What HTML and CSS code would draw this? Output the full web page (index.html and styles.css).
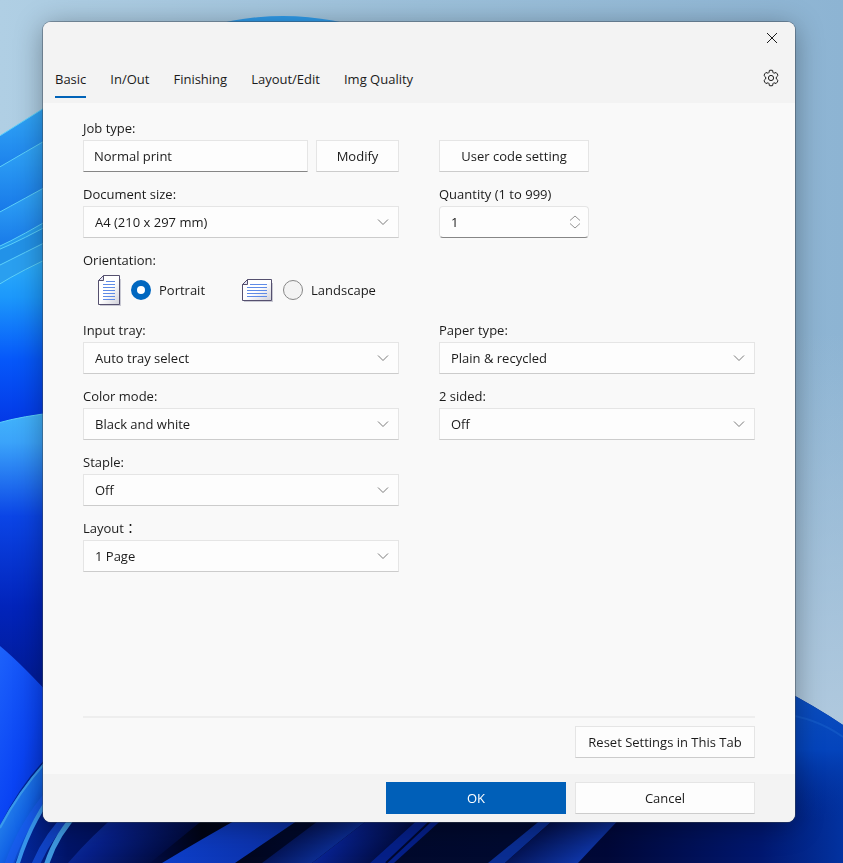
FILE: index.html
```html
<!DOCTYPE html>
<html lang="en">
<head>
  <meta charset="UTF-8" />
  <title>Printing Preferences</title>
  <link rel="stylesheet" href="styles.css">
</head>
<body>

  <!-- Desktop wallpaper -->
  <svg class="wallpaper" viewBox="0 0 843 863" preserveAspectRatio="none" aria-hidden="true">
    <defs>
      <linearGradient id="sky" x1="0" y1="0" x2="1" y2="0">
        <stop offset="0" stop-color="#b0cfe4" />
        <stop offset="0.5" stop-color="#9cc0da" />
        <stop offset="1" stop-color="#8db4d3" />
      </linearGradient>
      <linearGradient id="skyLow" x1="0" y1="0" x2="0" y2="1">
        <stop offset="0.2" stop-color="#b0c9de" stop-opacity="0" />
        <stop offset="0.8" stop-color="#b0c9de" />
      </linearGradient>
      <linearGradient id="band" x1="0" y1="0" x2="0" y2="1">
        <stop offset="0" stop-color="#35aefa" />
        <stop offset="1" stop-color="#0a5fe0" />
      </linearGradient>
      <linearGradient id="petal" x1="0" y1="0" x2="0" y2="1">
        <stop offset="0" stop-color="#2fb2fb" />
        <stop offset="0.25" stop-color="#1c98fb" />
        <stop offset="0.6" stop-color="#0658fa" />
        <stop offset="1" stop-color="#0335e4" />
      </linearGradient>
      <linearGradient id="petalLow" x1="0" y1="0" x2="0" y2="1">
        <stop offset="0" stop-color="#42b4fb" />
        <stop offset="0.1" stop-color="#3ba4fa" />
        <stop offset="0.35" stop-color="#0b45e6" />
        <stop offset="0.65" stop-color="#0224bb" />
        <stop offset="1" stop-color="#01188c" />
      </linearGradient>
      <linearGradient id="fold" x1="0" y1="0" x2="1" y2="1">
        <stop offset="0" stop-color="#1d62fb" />
        <stop offset="0.5" stop-color="#0a44f4" />
        <stop offset="1" stop-color="#0225b8" />
      </linearGradient>
      <linearGradient id="sweep" x1="0" y1="0" x2="1" y2="1">
        <stop offset="0.2" stop-color="#2f92ee" />
        <stop offset="0.5" stop-color="#1263e6" />
        <stop offset="0.8" stop-color="#0225a0" />
      </linearGradient>
      <linearGradient id="deep" x1="0" y1="0" x2="1" y2="0">
        <stop offset="0" stop-color="#0430b0" />
        <stop offset="0.08" stop-color="#011468" />
        <stop offset="0.16" stop-color="#010d50" />
        <stop offset="0.24" stop-color="#010415" />
        <stop offset="0.34" stop-color="#010828" />
        <stop offset="0.6" stop-color="#010a30" />
        <stop offset="0.72" stop-color="#010838" />
        <stop offset="0.9" stop-color="#01176f" />
        <stop offset="1" stop-color="#0232a0" />
      </linearGradient>
      <linearGradient id="stripe" x1="0" y1="0" x2="1" y2="0.4">
        <stop offset="0.1" stop-color="#1038a8" />
        <stop offset="0.4" stop-color="#07208a" />
        <stop offset="0.9" stop-color="#010a3a" />
      </linearGradient>
      <linearGradient id="stripeWide" x1="0" y1="0" x2="1" y2="0">
        <stop offset="0" stop-color="#0d3fca" />
        <stop offset="0.6" stop-color="#0c34b0" />
        <stop offset="1" stop-color="#0a2c98" />
      </linearGradient>
      <linearGradient id="stripeBack" x1="0" y1="0.4" x2="1" y2="1">
        <stop offset="0.1" stop-color="#010a3c" />
        <stop offset="0.7" stop-color="#0e34a4" />
      </linearGradient>
      <linearGradient id="rightHill" x1="0" y1="0" x2="0" y2="1">
        <stop offset="0" stop-color="#0c4fbe" />
        <stop offset="0.35" stop-color="#0444bc" />
        <stop offset="0.75" stop-color="#0232a0" stop-opacity="0" />
      </linearGradient>
    </defs>
    <rect width="843" height="863" fill="url(#sky)" />
    <rect y="200" width="843" height="663" fill="url(#skyLow)" />
    <ellipse cx="283" cy="76" rx="130" ry="60" fill="#2f9ae8" />

    <g stroke="#5cd0fa" stroke-width="1">
      <path fill="url(#band)" d="M-2 137 Q22 122 60 98 V220 H-2Z" />
      <path fill="url(#band)" d="M-2 168 Q22 154 60 132 V250 H-2Z" />
      <path fill="url(#band)" d="M-2 213 Q22 200 60 179 V280 H-2Z" />
      <path fill="#269eee" d="M-2 247 Q22 236 60 213 V300 H-2Z" />
      <path fill="#2292e8" d="M-2 250 Q22 240 60 219 V300 H-2Z" />
      <path fill="#2a9fef" d="M-2 266 Q22 254 60 235 V320 H-2Z" />
      <path fill="url(#petal)" d="M-2 285 Q22 270 60 253 V430 H-2Z" />
      <path fill="url(#petalLow)" d="M-2 423 Q22 416 60 412 V710 H-2Z" />
    </g>
    <rect y="740" width="780" height="123" fill="#010a30" />
    <path fill="url(#deep)" d="M0 760 H780 V688 Q815 706 843 725 V863 H0Z" />
    <path fill="url(#fold)" d="M0 646 Q22 664 60 706 V745 Q25 775 0 825Z" />
    <path fill="url(#sweep)" d="M0 825 Q22 784 60 745 V790 Q32 820 15 863 H0Z" />
    <g fill="none">
      <path stroke="#3a9aec" stroke-width="2" d="M60 747 Q22 785 0 828" />
      <path stroke="#1a5cf0" stroke-width="8" opacity="0.7" d="M52 790 Q22 825 8 866" />
      <path stroke="#3794ea" stroke-width="4" d="M60 784 Q32 817 17 866" />
      <path stroke="#1a5cf0" stroke-width="8" opacity="0.6" d="M72 812 Q48 835 35 866" />
      <path stroke="#3e97de" stroke-width="5" d="M80 810 Q56 834 46 866" />
    </g>
    <path fill="url(#stripe)" d="M68 863 Q92 835 122 810 H215 L150 863Z" />
    <path fill="url(#stripeWide)" d="M162 863 Q200 840 250 812 H310 L235 863Z" />
    <path fill="url(#stripeBack)" d="M262 863 L330 812 H378 L312 863Z" />
    <path fill="url(#stripe)" d="M312 863 L378 812 H426 L370 863Z" />
    <path fill="#051f87" d="M370 863 L424 814 H448 L394 863Z" />
    <path stroke="#01082e" stroke-width="2" d="M386 863 L438 814" />
    <path fill="#0a2d91" d="M488 863 L548 814 H560 L505 863Z" />
    <path fill="url(#stripeBack)" d="M505 863 L560 814 H624 L578 863Z" />
    <path fill="url(#rightHill)" d="M780 688 Q815 706 843 725 V863 H780Z" />
    <path fill="none" stroke="#175fca" stroke-width="2" opacity="0.6" d="M780 714 Q815 717 843 737" />
  </svg>

  <form class="dialog">
    <div class="titlebar">
      <button type="button" class="icon-button" aria-label="Close">
        <svg width="12" height="12" viewBox="0 0 12 12"><path d="M1 1 L11 11 M11 1 L1 11" /></svg>
      </button>
    </div>

    <div class="tabbar">
      <nav class="tabs">
        <a href="#basic" class="tab active">Basic</a>
        <a href="#inout" class="tab">In/Out</a>
        <a href="#finishing" class="tab">Finishing</a>
        <a href="#layout" class="tab">Layout/Edit</a>
        <a href="#quality" class="tab">Img Quality</a>
      </nav>
      <button type="button" class="icon-button" aria-label="Settings">
        <svg width="18" height="18" viewBox="0 0 18 18">
          <path d="M7.4 1.4 Q9 1 10.6 1.4 L11 3.5 Q11.3 4 12 4.2 L14.1 3.5 Q15.6 4.9 16 6.5 L14.4 8 Q14 9 14.4 10 L16 11.5 Q15.6 13.1 14.1 14.5 L12 13.8 Q11.3 14 11 14.5 L10.6 16.6 Q9 17 7.4 16.6 L7 14.5 Q6.7 14 6 13.8 L3.9 14.5 Q2.4 13.1 2 11.5 L3.6 10 Q4 9 3.6 8 L2 6.5 Q2.4 4.9 3.9 3.5 L6 4.2 Q6.7 4 7 3.5Z" />
          <circle cx="9" cy="9" r="2.6" />
        </svg>
      </button>
    </div>

    <div class="panel">
      <div class="fields">
        <div class="field">
          <label for="jobType">Job type:</label>
          <div class="row">
            <input type="text" id="jobType" class="control textbox" value="Normal print" readonly />
            <button type="button" class="button modify">Modify</button>
          </div>
        </div>
        <div class="field bottom">
          <button type="button" class="button narrow">User code setting</button>
        </div>

        <div class="field">
          <label for="docSize">Document size:</label>
          <div class="select">
            <select id="docSize" class="control"><option>A4 (210 x 297 mm)</option></select>
            <svg class="chevron" width="12" height="8" viewBox="0 0 12 8"><path d="M1 1.5 L6 6.5 L11 1.5" /></svg>
          </div>
        </div>
        <div class="field">
          <label for="quantity">Quantity (1 to 999)</label>
          <div class="select narrow">
            <input type="number" id="quantity" class="control number" value="1" min="1" max="999" />
            <svg class="spinner" width="12" height="14" viewBox="0 0 12 14"><path d="M1 5.5 L6 1 L11 5.5 M1 8.5 L6 13 L11 8.5" /></svg>
          </div>
        </div>

        <fieldset class="field wide">
          <legend>Orientation:</legend>
          <div class="radios">
            <label class="radio">
              <svg class="paper" width="24" height="32" viewBox="0 0 24 32">
                <path fill="#c9c9d3" d="M3 5 H24 V32 H3Z" />
                <path fill="url(#sheet)" stroke="#55506f" d="M6.5 1.5 H22.5 V30.5 H1.5 V6.5Z" />
                <path fill="#e4e4f2" stroke="#55506f" d="M6.5 1.5 V6.5 H1.5Z" />
                <path stroke="#5f8be6" d="M9 7.5 H18 M6 10.5 H18 M6 13.5 H18 M6 16.5 H18 M6 19.5 H18 M6 22.5 H18 M6 25.5 H18" />
                <defs>
                  <linearGradient id="sheet" x1="0" y1="0" x2="1" y2="1">
                    <stop offset="0.5" stop-color="#ffffff" />
                    <stop offset="1" stop-color="#cfcfd8" />
                  </linearGradient>
                </defs>
              </svg>
              <input type="radio" name="orientation" checked />
              Portrait
            </label>
            <label class="radio">
              <svg class="paper" width="32" height="24" viewBox="0 0 32 24">
                <path fill="#c9c9d3" d="M3 5 H32 V24 H3Z" />
                <path fill="url(#sheet)" stroke="#55506f" d="M6.5 1.5 H30.5 V22.5 H1.5 V6.5Z" />
                <path fill="#e4e4f2" stroke="#55506f" d="M6.5 1.5 V6.5 H1.5Z" />
                <path stroke="#5f8be6" d="M9 6.5 H26 M6 9.5 H26 M6 12.5 H26 M6 15.5 H26 M6 18.5 H26" />
              </svg>
              <input type="radio" name="orientation" />
              Landscape
            </label>
          </div>
        </fieldset>

        <div class="field">
          <label for="tray">Input tray:</label>
          <div class="select">
            <select id="tray" class="control"><option>Auto tray select</option></select>
            <svg class="chevron" width="12" height="8" viewBox="0 0 12 8"><path d="M1 1.5 L6 6.5 L11 1.5" /></svg>
          </div>
        </div>
        <div class="field">
          <label for="paperType">Paper type:</label>
          <div class="select">
            <select id="paperType" class="control"><option>Plain &amp; recycled</option></select>
            <svg class="chevron" width="12" height="8" viewBox="0 0 12 8"><path d="M1 1.5 L6 6.5 L11 1.5" /></svg>
          </div>
        </div>

        <div class="field">
          <label for="color">Color mode:</label>
          <div class="select">
            <select id="color" class="control"><option>Black and white</option></select>
            <svg class="chevron" width="12" height="8" viewBox="0 0 12 8"><path d="M1 1.5 L6 6.5 L11 1.5" /></svg>
          </div>
        </div>
        <div class="field">
          <label for="sided">2 sided:</label>
          <div class="select">
            <select id="sided" class="control"><option>Off</option></select>
            <svg class="chevron" width="12" height="8" viewBox="0 0 12 8"><path d="M1 1.5 L6 6.5 L11 1.5" /></svg>
          </div>
        </div>

        <div class="field first">
          <label for="staple">Staple:</label>
          <div class="select">
            <select id="staple" class="control"><option>Off</option></select>
            <svg class="chevron" width="12" height="8" viewBox="0 0 12 8"><path d="M1 1.5 L6 6.5 L11 1.5" /></svg>
          </div>
        </div>
        <div class="field first">
          <label for="pages">Layout：</label>
          <div class="select">
            <select id="pages" class="control"><option>1 Page</option></select>
            <svg class="chevron" width="12" height="8" viewBox="0 0 12 8"><path d="M1 1.5 L6 6.5 L11 1.5" /></svg>
          </div>
        </div>
      </div>

      <div class="reset">
        <button type="reset" class="button action">Reset Settings in This Tab</button>
      </div>
    </div>

    <div class="footer">
      <button type="submit" class="button action primary">OK</button>
      <button type="button" class="button action">Cancel</button>
    </div>
  </form>

</body>
</html>
```
FILE: styles.css
```css
* {
  box-sizing: border-box;
}

body {
  margin: 0;
  padding: 22px 48px 41px 43px;
  min-height: 100vh;
  display: flex;
  font-family: "Open Sans", "Noto Sans CJK JP", sans-serif;
  font-size: 13px;
  line-height: 20px;
  color: #1b1b1b;
}

.wallpaper {
  position: fixed;
  top: 0;
  left: 0;
  width: 100%;
  height: 100%;
  z-index: -1;
}

.dialog {
  flex: 1;
  display: flex;
  flex-direction: column;
  background-color: #f9f9f9;
  border-radius: 8px;
  overflow: hidden;
  box-shadow: 0 0 0 1px rgba(60, 70, 85, 0.45), 0 4px 28px rgba(0, 0, 0, 0.35);
}

.titlebar {
  display: flex;
  justify-content: flex-end;
  height: 32px;
  padding-right: 7px;
  background-color: #f3f3f3;
}

.icon-button {
  display: flex;
  align-items: center;
  justify-content: center;
  width: 32px;
  height: 32px;
  padding: 0;
  border: none;
  background: none;
}

.icon-button svg {
  fill: none;
  stroke: #1b1b1b;
}

/* Tabs */
.tabbar {
  display: flex;
  justify-content: space-between;
  height: 49px;
  padding: 8px 8px 0 12px;
  background-color: #f3f3f3;
}

.tabs {
  display: flex;
  gap: 24px;
}

.tab {
  height: 36px;
  padding-top: 7px;
  color: #1b1b1b;
  text-decoration: none;
  white-space: nowrap;
}

.tab.active {
  border-bottom: 2px solid #0063b8;
}

/* Panel */
.panel {
  flex: 1;
  display: flex;
  flex-direction: column;
  padding: 15px 40px 16px;
}

.fields {
  display: grid;
  grid-template-columns: 1fr 1fr;
  gap: 12px 40px;
}

.field {
  display: flex;
  flex-direction: column;
  gap: 2px;
  min-width: 0;
}

.field.bottom {
  justify-content: flex-end;
}

.field.first {
  grid-column: 1;
}

.field.wide {
  grid-column: 1 / 3;
  display: block;
  margin: 0;
  padding: 0;
  border: none;
}

legend {
  padding: 0;
}

.row {
  display: flex;
  gap: 8px;
}

.narrow {
  width: 150px;
}

.control,
.button {
  height: 32px;
  border: 1px solid #e5e5e5;
  border-bottom-color: #cccccc;
  border-radius: 0;
  background-color: #fdfdfd;
  font: inherit;
  color: #1b1b1b;
}

.control {
  width: 100%;
  min-width: 0;
  padding: 0 11px;
  appearance: none;
}

.textbox {
  flex: 1;
  padding: 0 10px;
  border-bottom-color: #868686;
}

.number {
  border-radius: 4px;
  border-bottom-color: #868686;
  appearance: textfield;
}

.number::-webkit-inner-spin-button {
  appearance: none;
  margin: 0;
}

.button {
  padding: 0;
  text-align: center;
  white-space: nowrap;
}

.modify {
  width: 83px;
}

.select {
  position: relative;
}

.chevron,
.spinner {
  position: absolute;
  right: 10px;
  top: 12px;
  fill: none;
  stroke: #7a7a7a;
  pointer-events: none;
}

.spinner {
  right: 8px;
  top: 9px;
  stroke: #949494;
}

/* Orientation */
.radios {
  display: flex;
  align-items: center;
  height: 36px;
  margin-top: 2px;
  padding-left: 14px;
  gap: 36px;
}

.radio {
  display: flex;
  align-items: center;
  gap: 8px;
}

.paper {
  fill: none;
}

.radio input {
  appearance: none;
  width: 20px;
  height: 20px;
  margin: 0 0 0 2px;
  border: 1px solid #868686;
  border-radius: 50%;
  background-color: #f3f3f3;
}

.radio input:checked {
  border: 6px solid #0067c0;
  background-color: #ffffff;
}

.reset {
  display: flex;
  justify-content: flex-end;
  margin-top: auto;
  padding-top: 8px;
  border-top: 2px solid #eeeeee;
}

.action {
  width: 180px;
}

.footer {
  display: flex;
  justify-content: flex-end;
  gap: 9px;
  padding: 8px 40px;
  background-color: #f3f3f3;
}

.primary {
  border-color: #005fb8;
  background-color: #005fb8;
  color: #ffffff;
}
```
